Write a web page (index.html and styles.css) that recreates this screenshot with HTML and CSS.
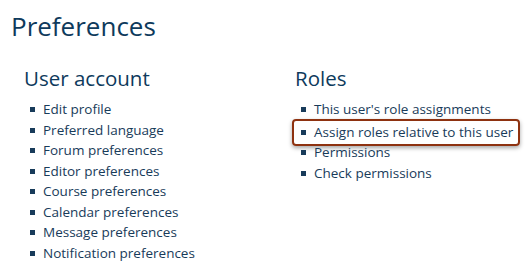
FILE: index.html
```html
<!DOCTYPE html>
<html lang="en">
<head>
    <meta charset="UTF-8">
    <title>Preferences</title>
    <link rel="stylesheet" href="styles.css">
</head>
<body>
    <div class="page">
        <h1>Preferences</h1>

        <div class="columns">
            <div class="section">
                <h2>User account</h2>
                <ul class="links">
                    <li>Edit profile</li>
                    <li>Preferred language</li>
                    <li>Forum preferences</li>
                    <li>Editor preferences</li>
                    <li>Course preferences</li>
                    <li>Calendar preferences</li>
                    <li>Message preferences</li>
                    <li>Notification preferences</li>
                </ul>
            </div>

            <div class="section">
                <h2>Roles</h2>
                <ul class="links">
                    <li>This user's role assignments</li>
                    <li class="highlight">Assign roles relative to this user</li>
                    <li>Permissions</li>
                    <li>Check permissions</li>
                </ul>
            </div>
        </div>
    </div>
</body>
</html>
```

FILE: styles.css
```css
body {
    margin: 0;
    background-color: #ffffff;
    font-family: 'Open Sans', 'Noto Sans', sans-serif;
    color: #183b5a;
}
.page {
    padding: 9px 0 0 11px;
}
h1 {
    margin: 0;
    font-size: 26px;
    font-weight: 400;
    line-height: 34px;
    color: #0e3a5c;
}
.columns {
    display: grid;
    grid-template-columns: 271px 1fr;
    padding-left: 13px;
    margin-top: 22px;
}
h2 {
    margin: 0 0 8px 0;
    font-size: 20.5px;
    font-weight: 400;
    line-height: 26px;
    color: #0e3a5c;
}
.links {
    list-style: none;
    margin: 0;
    padding: 0;
}
.links li {
    position: relative;
    padding-left: 19px;
    font-size: 13.5px;
    line-height: 20.5px;
}
.links li::before {
    content: '';
    position: absolute;
    left: 6px;
    top: 8px;
    width: 5px;
    height: 5px;
    background-color: #183b5a;
}
.highlight {
    display: inline-block;
}
.highlight::after {
    content: '';
    position: absolute;
    left: -3px;
    right: -7px;
    top: -3px;
    bottom: -4px;
    border: 2.5px solid #8e3210;
    border-radius: 4px;
    box-shadow: 0 2px 4px rgba(0, 0, 0, 0.35);
}
```
